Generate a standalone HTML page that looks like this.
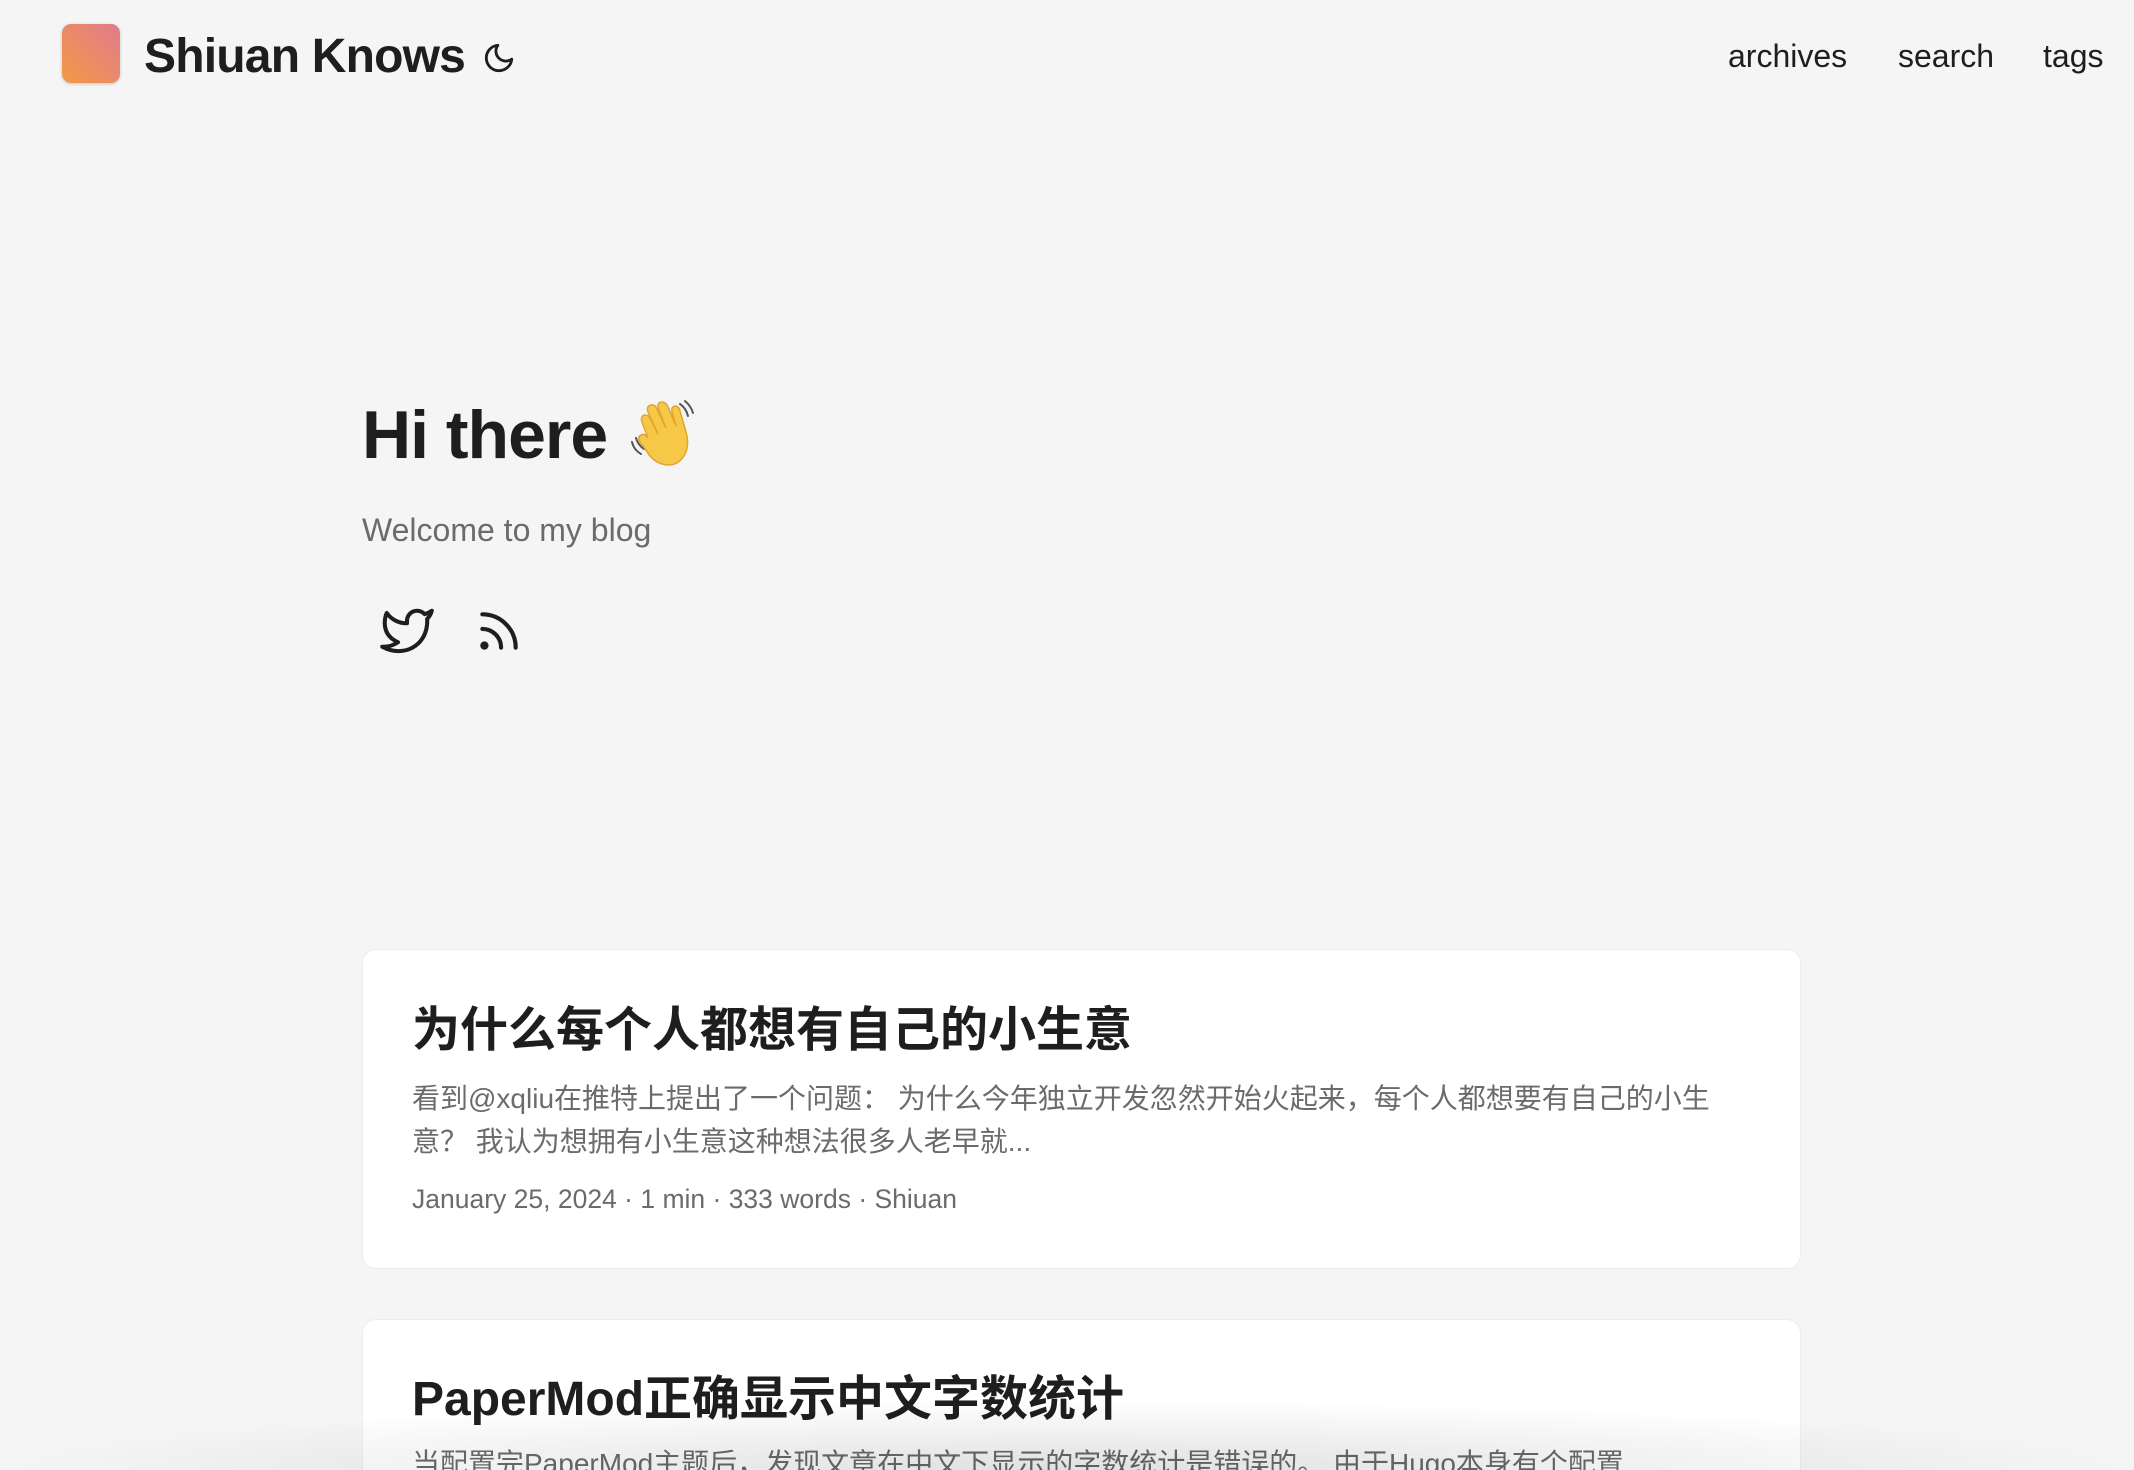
<!DOCTYPE html>
<html style="height:1470px;overflow:hidden"><head><meta charset="utf-8"><style>
html,body{margin:0;padding:0}
body{width:2134px;height:1470px;overflow:hidden;background:#f5f5f5;position:relative;font-family:"Liberation Sans","Noto Sans CJK SC",sans-serif;color:#1e1e1e}
.abs{position:absolute;white-space:nowrap}
.logo{left:62px;top:24px;width:58px;height:59px;border-radius:9px;background:linear-gradient(45deg,#f19a45,#e27a8e);box-shadow:0 1px 3px rgba(0,0,0,.2)}
.brand{left:144px;top:27px;font-size:48px;font-weight:bold;letter-spacing:-0.8px;line-height:60px}
.nav{top:36px;font-size:32px;line-height:40px}
.card{position:absolute;left:362px;width:1439px;background:#fff;border:1px solid #ececec;border-radius:14px;box-sizing:border-box;overflow:hidden}
.t{position:absolute;left:49px;font-size:48px;font-weight:bold;white-space:nowrap}
.ex{position:absolute;left:49px;font-size:28px;line-height:43px;color:#6b6b6b;white-space:nowrap}
.meta{position:absolute;left:49px;font-size:26.5px;color:#6b6b6b;white-space:nowrap}
</style></head><body>
<div class="abs logo"></div>
<div class="abs brand">Shiuan Knows</div>
<svg class="abs" style="left:482px;top:41px" width="34" height="34" viewBox="0 0 24 24" fill="none" stroke="#1e1e1e" stroke-width="2" stroke-linecap="round" stroke-linejoin="round"><path d="M21 12.79A9 9 0 1 1 11.21 3 7 7 0 0 0 21 12.79z"/></svg>
<div class="abs nav" style="left:1728px">archives</div>
<div class="abs nav" style="left:1898px">search</div>
<div class="abs nav" style="left:2043px">tags</div>

<div class="abs" style="left:362px;top:395px;font-size:68px;font-weight:bold;line-height:80px;letter-spacing:-1px">Hi there</div>
<svg class="abs" style="left:628px;top:398px" width="76" height="72" viewBox="0 0 76 72">
<g stroke="#555" stroke-width="2" fill="none" stroke-linecap="round"><path d="M52 6q6 4 8 12"/><path d="M57 3q6 5 8 12"/><path d="M4 44q2 8 9 12"/><path d="M8 40q2 7 8 11"/></g>
<path d="M20 40 L14 24 q-2-6 3-7 q4 0 6 5 L30 36 L20 14 q-2-6 3-7 q4-1 6 4 L38 30 L30 10 q-1-6 4-6 q4 0 6 5 L48 28 L44 14 q-1-5 3-6 q4 0 5 5 L58 34 q4 14-2 24 q-8 12-22 8 q-10-3-16-14 L12 44 q-3-5 1-7 q4-2 7 3z" fill="#f7c748" stroke="#e0a530" stroke-width="1.5"/>
</svg>
<div class="abs" style="left:362px;top:510px;font-size:32px;color:#6b6b6b;line-height:40px">Welcome to my blog</div>
<svg class="abs" style="left:380px;top:604px" width="54" height="54" viewBox="0 0 24 24" fill="none" stroke="#1e1e1e" stroke-width="1.8" stroke-linecap="round" stroke-linejoin="round"><path d="M23 3a10.9 10.9 0 0 1-3.14 1.53 4.48 4.48 0 0 0-7.86 3v1A10.66 10.66 0 0 1 3 4s-4 9 5 13a11.64 11.64 0 0 1-7 2c9 5 20 0 20-11.5a4.5 4.5 0 0 0-.08-.83A7.72 7.72 0 0 0 23 3z"/></svg>
<svg class="abs" style="left:474px;top:606px" width="50" height="50" viewBox="0 0 24 24" fill="none" stroke="#1e1e1e" stroke-width="2" stroke-linecap="round" stroke-linejoin="round"><path d="M4 11a9 9 0 0 1 9 9"/><path d="M4 4a16 16 0 0 1 16 16"/><circle cx="5" cy="19" r="1"/></svg>

<div class="card" style="top:949px;height:320px">
<div class="t" style="top:46px;line-height:70px">为什么每个人都想有自己的小生意</div>
<div class="ex" style="top:127px">看到@xqliu在推特上提出了一个问题： 为什么今年独立开发忽然开始火起来，每个人都想要有自己的小生<br>意？ 我认为想拥有小生意这种想法很多人老早就...</div>
<div class="meta" style="top:234px">January 25, 2024 · 1 min · 333 words · Shiuan</div>
</div>
<div class="card" style="top:1319px;height:151px;border-bottom:none;border-radius:14px 14px 0 0">
<div class="t" style="top:45px;line-height:70px">PaperMod正确显示中文字数统计</div>
<div class="ex" style="top:122px">当配置完PaperMod主题后，发现文章在中文下显示的字数统计是错误的。 由于Hugo本身有个配置</div>
</div>
<div class="abs" style="left:0;top:1400px;width:2134px;height:70px;background:radial-gradient(ellipse 50% 100% at 50% 100%,rgba(0,0,0,.12),rgba(0,0,0,0) 100%)"></div>
</body></html>
